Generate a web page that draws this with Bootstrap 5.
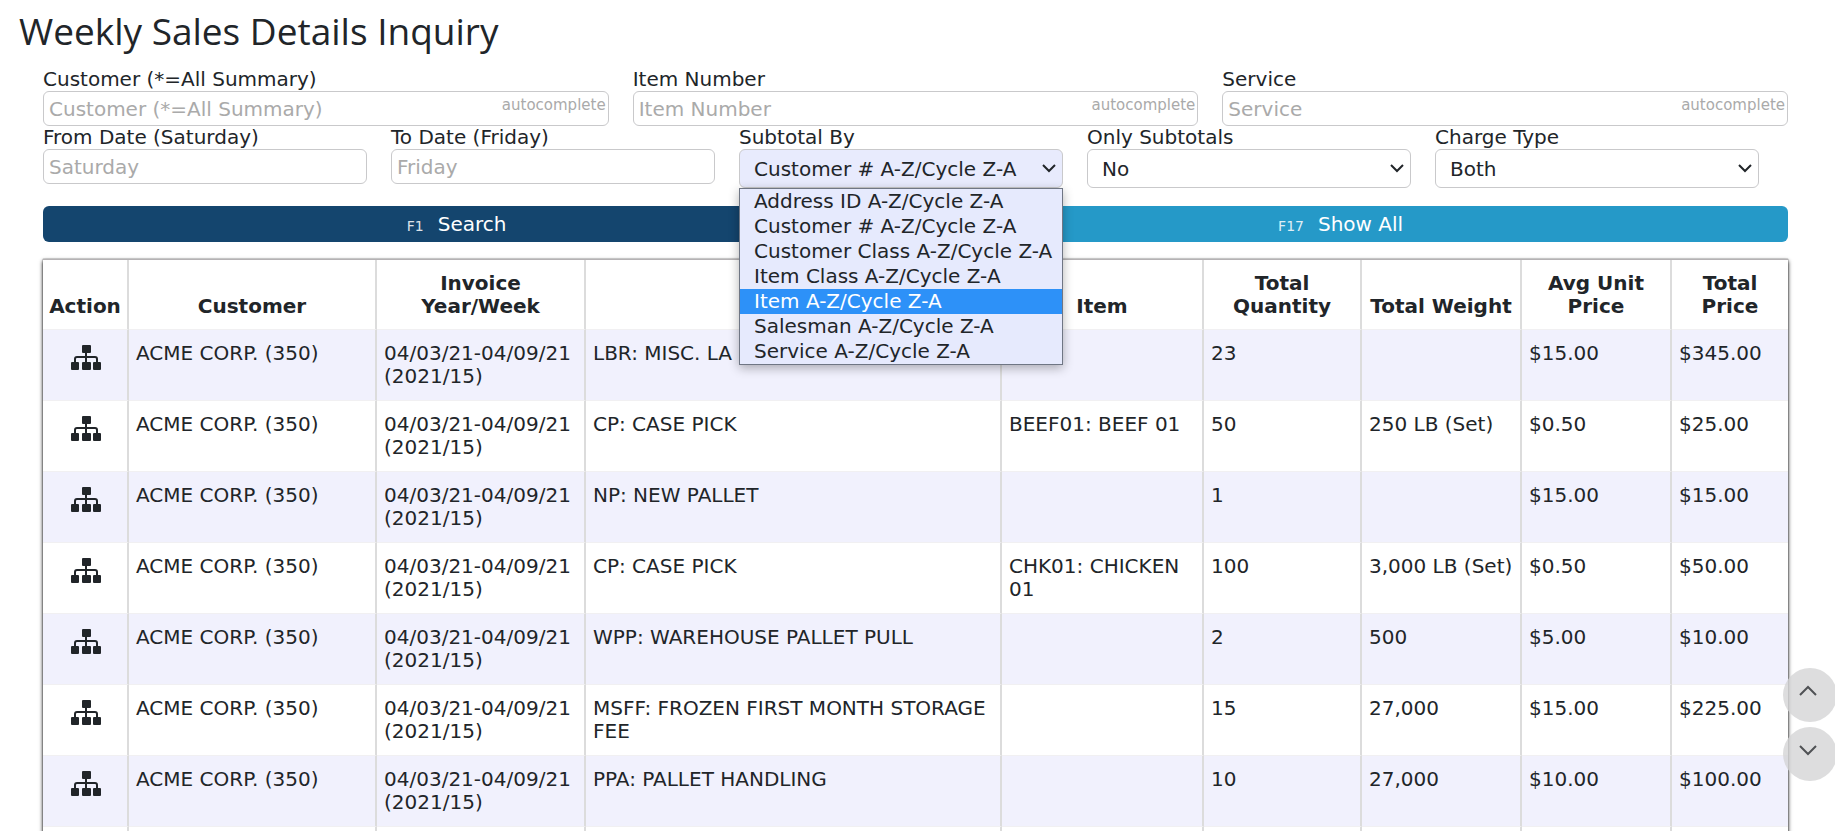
<!DOCTYPE html>
<html lang="en">
<head>
<meta charset="utf-8">
<meta name="viewport" content="width=device-width, initial-scale=1">
<title>Weekly Sales Details Inquiry</title>
<link href="https://cdn.jsdelivr.net/npm/bootstrap@5.3.0/dist/css/bootstrap.min.css" rel="stylesheet">
<style>
  body { font-family: "DejaVu Sans", sans-serif; font-size: 20px; line-height: 23px; color: #212529; background: #fff; }
  .page-title { font-family: "Open Sans", sans-serif; font-size: 37px; line-height: 44px; font-weight: 400; padding: 9px 20px 15px 19px; margin: 0; }
  .page-main { padding: 0 47px 0 43px; }
  .filters { display: grid; gap: 24px; }
  .filters-top { grid-template-columns: repeat(3, 1fr); }
  .filters-bottom { grid-template-columns: repeat(5, 1fr); padding-right: 29px; height: 62px; }
  .filters label { display: block; height: 23px; white-space: nowrap; }
  .form-control.field { height: 35px; padding: 0 5px; font-size: 20px; line-height: 23px; border: 1px solid #c9c9cb; border-radius: 6px; }
  .form-control.field::placeholder { color: #aaa; opacity: 1; }
  .form-select.field { height: 39px; padding: 2px 30px 0 14px; font-size: 20px; line-height: 23px; color: #212529; border: 1px solid #c9c9cb; border-radius: 6px;
    background-image: url("data:image/svg+xml,%3csvg xmlns='http://www.w3.org/2000/svg' viewBox='0 0 14 9'%3e%3cpath fill='none' stroke='%23212529' stroke-width='2' d='M1 1l6 6 6-6'/%3e%3c/svg%3e");
    background-size: 14px 9px; background-position: right 6px center; }
  .form-select.field.is-open { background-color: #e8ebfd; }
  .auto-hint { top: 3px; right: 3px; font-size: 15px; line-height: 23px; color: #aaa; pointer-events: none; }
  .option-list { top: 62px; left: 0; right: 0; z-index: 5; background: #e6eafd; border: 1px solid #6f7684; box-shadow: 0 3px 10px rgba(0,0,0,.3); }
  .option-list li { height: 25px; line-height: 25px; padding-left: 14px; white-space: nowrap; }
  .option-list .is-current { background: #2d91f8; color: #fff; }
  .actions { margin-top: 18px; border-radius: 6px; overflow: hidden; }
  .actions .btn { height: 36px; padding: 0; border: 0; border-radius: 0; color: #fff; font-size: 20px; line-height: 36px; }
  .actions small { font-size: 14px; margin-right: 14px; opacity: .85; }
  .btn-search { background: #14456e !important; flex: 95 1 0; padding-right: 35px !important; }
  .btn-all { background: #2599c8 !important; flex: 100 1 0; padding-right: 12px !important; }
  .sheet { margin-top: 17px; border-top: 1px solid #b5b2b4; box-shadow: 0 2px 4px #000, 0 0 1px #444; }
  .sheet table { table-layout: fixed; color: inherit; border-collapse: separate; border-spacing: 0; background: #fff; }
  .sheet th, .sheet td { border-right: 2px solid #dcdcdc; border-bottom: 1px solid #f1f0f2; vertical-align: top; }
  .sheet th:last-child, .sheet td:last-child { border-right: 0; }
  .sheet th { height: 70px; padding: 12px 6px 11px; text-align: center; vertical-align: bottom; }
  .sheet td { height: 71px; padding: 12px 4px 12px 7px; }
  .sheet tbody tr:nth-child(odd) td { background: #f1f1fd; }
  .sheet td:first-child { text-align: center; padding-left: 5px; }
  .sheet a { display: block; color: #212529; line-height: 0; padding-top: 3px; }
  .scrollers { right: -2px; bottom: 50px; gap: 5px; z-index: 6; }
  .scrollers button { width: 54px; height: 54px; border: 0; border-radius: 50%; background: rgba(212,212,214,.8); padding: 0 4px 8px 0; line-height: 0; }
  .c-action { width: 86px; } .c-cust { width: 248px; } .c-week { width: 209px; } .c-item { width: 202px; }
  .c-qty { width: 158px; } .c-weight { width: 160px; } .c-avg { width: 150px; } .c-total { width: 116px; }
</style>
</head>
<body>
<svg width="0" height="0" class="position-absolute" aria-hidden="true">
  <symbol id="sitemap" viewBox="0 0 30 25">
    <path fill="none" stroke="currentColor" stroke-width="2" d="M15 7v12M4 19v-5q0-2 2-2h18q2 0 2 2v5"/>
    <rect x="11" y="0" width="9" height="8" rx="1" fill="currentColor"/>
    <rect x="0" y="17" width="8" height="8" rx="1" fill="currentColor"/>
    <rect x="11" y="17" width="9" height="8" rx="1" fill="currentColor"/>
    <rect x="22" y="17" width="8" height="8" rx="1" fill="currentColor"/>
  </symbol>
</svg>
<div class="vh-100 overflow-hidden">
<h1 class="page-title">Weekly Sales Details Inquiry</h1>
<main class="page-main">
  <form>
    <div class="filters filters-top">
      <div>
        <label for="cust">Customer (*=All Summary)</label>
        <div class="position-relative"><input id="cust" class="form-control field" placeholder="Customer (*=All Summary)"><span class="auto-hint position-absolute">autocomplete</span></div>
      </div>
      <div>
        <label for="item">Item Number</label>
        <div class="position-relative"><input id="item" class="form-control field" placeholder="Item Number"><span class="auto-hint position-absolute">autocomplete</span></div>
      </div>
      <div>
        <label for="serv">Service</label>
        <div class="position-relative"><input id="serv" class="form-control field" placeholder="Service"><span class="auto-hint position-absolute">autocomplete</span></div>
      </div>
    </div>
    <div class="filters filters-bottom">
      <div>
        <label for="from">From Date (Saturday)</label>
        <input id="from" class="form-control field" placeholder="Saturday">
      </div>
      <div>
        <label for="to">To Date (Friday)</label>
        <input id="to" class="form-control field" placeholder="Friday">
      </div>
      <div class="position-relative">
        <label for="subtotal">Subtotal By</label>
        <select id="subtotal" class="form-select field is-open"><option>Customer # A-Z/Cycle Z-A</option></select>
        <ul class="option-list list-unstyled position-absolute mb-0" role="listbox" aria-label="Subtotal By">
          <li role="option">Address ID A-Z/Cycle Z-A</li>
          <li role="option">Customer # A-Z/Cycle Z-A</li>
          <li role="option">Customer Class A-Z/Cycle Z-A</li>
          <li role="option">Item Class A-Z/Cycle Z-A</li>
          <li role="option" class="is-current" aria-selected="true">Item A-Z/Cycle Z-A</li>
          <li role="option">Salesman A-Z/Cycle Z-A</li>
          <li role="option">Service A-Z/Cycle Z-A</li>
        </ul>
      </div>
      <div>
        <label for="only">Only Subtotals</label>
        <select id="only" class="form-select field"><option>No</option><option>Yes</option></select>
      </div>
      <div>
        <label for="charge">Charge Type</label>
        <select id="charge" class="form-select field"><option>Both</option></select>
      </div>
    </div>
    <div class="actions d-flex">
      <button type="button" class="btn btn-search"><small>F1</small>Search</button>
      <button type="button" class="btn btn-all"><small>F17</small>Show All</button>
    </div>
  </form>
  <div class="sheet">
    <table class="w-100">
      <colgroup><col class="c-action"><col class="c-cust"><col class="c-week"><col><col class="c-item"><col class="c-qty"><col class="c-weight"><col class="c-avg"><col class="c-total"></colgroup>
      <thead>
        <tr><th>Action</th><th>Customer</th><th>Invoice<br>Year/Week</th><th aria-label="Service"></th><th>Item</th><th>Total<br>Quantity</th><th class="text-nowrap">Total Weight</th><th>Avg Unit<br>Price</th><th>Total<br>Price</th></tr>
      </thead>
      <tbody>
        <tr><td><a href="#" aria-label="Details"><svg width="30" height="25"><use href="#sitemap"/></svg></a></td><td>ACME CORP. (350)</td><td>04/03/21-04/09/21 (2021/15)</td><td>LBR: MISC. LA</td><td></td><td>23</td><td></td><td>$15.00</td><td>$345.00</td></tr>
        <tr><td><a href="#" aria-label="Details"><svg width="30" height="25"><use href="#sitemap"/></svg></a></td><td>ACME CORP. (350)</td><td>04/03/21-04/09/21 (2021/15)</td><td>CP: CASE PICK</td><td>BEEF01: BEEF 01</td><td>50</td><td>250 LB (Set)</td><td>$0.50</td><td>$25.00</td></tr>
        <tr><td><a href="#" aria-label="Details"><svg width="30" height="25"><use href="#sitemap"/></svg></a></td><td>ACME CORP. (350)</td><td>04/03/21-04/09/21 (2021/15)</td><td>NP: NEW PALLET</td><td></td><td>1</td><td></td><td>$15.00</td><td>$15.00</td></tr>
        <tr><td><a href="#" aria-label="Details"><svg width="30" height="25"><use href="#sitemap"/></svg></a></td><td>ACME CORP. (350)</td><td>04/03/21-04/09/21 (2021/15)</td><td>CP: CASE PICK</td><td>CHK01: CHICKEN 01</td><td>100</td><td class="text-nowrap">3,000 LB (Set)</td><td>$0.50</td><td>$50.00</td></tr>
        <tr><td><a href="#" aria-label="Details"><svg width="30" height="25"><use href="#sitemap"/></svg></a></td><td>ACME CORP. (350)</td><td>04/03/21-04/09/21 (2021/15)</td><td>WPP: WAREHOUSE PALLET PULL</td><td></td><td>2</td><td>500</td><td>$5.00</td><td>$10.00</td></tr>
        <tr><td><a href="#" aria-label="Details"><svg width="30" height="25"><use href="#sitemap"/></svg></a></td><td>ACME CORP. (350)</td><td>04/03/21-04/09/21 (2021/15)</td><td>MSFF: FROZEN FIRST MONTH STORAGE FEE</td><td></td><td>15</td><td>27,000</td><td>$15.00</td><td>$225.00</td></tr>
        <tr><td><a href="#" aria-label="Details"><svg width="30" height="25"><use href="#sitemap"/></svg></a></td><td>ACME CORP. (350)</td><td>04/03/21-04/09/21 (2021/15)</td><td>PPA: PALLET HANDLING</td><td></td><td>10</td><td>27,000</td><td>$10.00</td><td>$100.00</td></tr>
        <tr><td></td><td></td><td></td><td></td><td></td><td></td><td></td><td></td><td></td></tr>
      </tbody>
    </table>
  </div>
</main>
</div>
<div class="scrollers position-fixed d-flex flex-column">
  <button type="button" aria-label="Scroll up"><svg width="18" height="12" viewBox="0 0 18 12" fill="none" stroke="#505255" stroke-width="2"><path d="M1 10l8-8 8 8"/></svg></button>
  <button type="button" aria-label="Scroll down"><svg width="18" height="12" viewBox="0 0 18 12" fill="none" stroke="#505255" stroke-width="2"><path d="M1 2l8 8 8-8"/></svg></button>
</div>
<script src="https://cdn.jsdelivr.net/npm/bootstrap@5.3.0/dist/js/bootstrap.bundle.min.js"></script>
</body>
</html>
